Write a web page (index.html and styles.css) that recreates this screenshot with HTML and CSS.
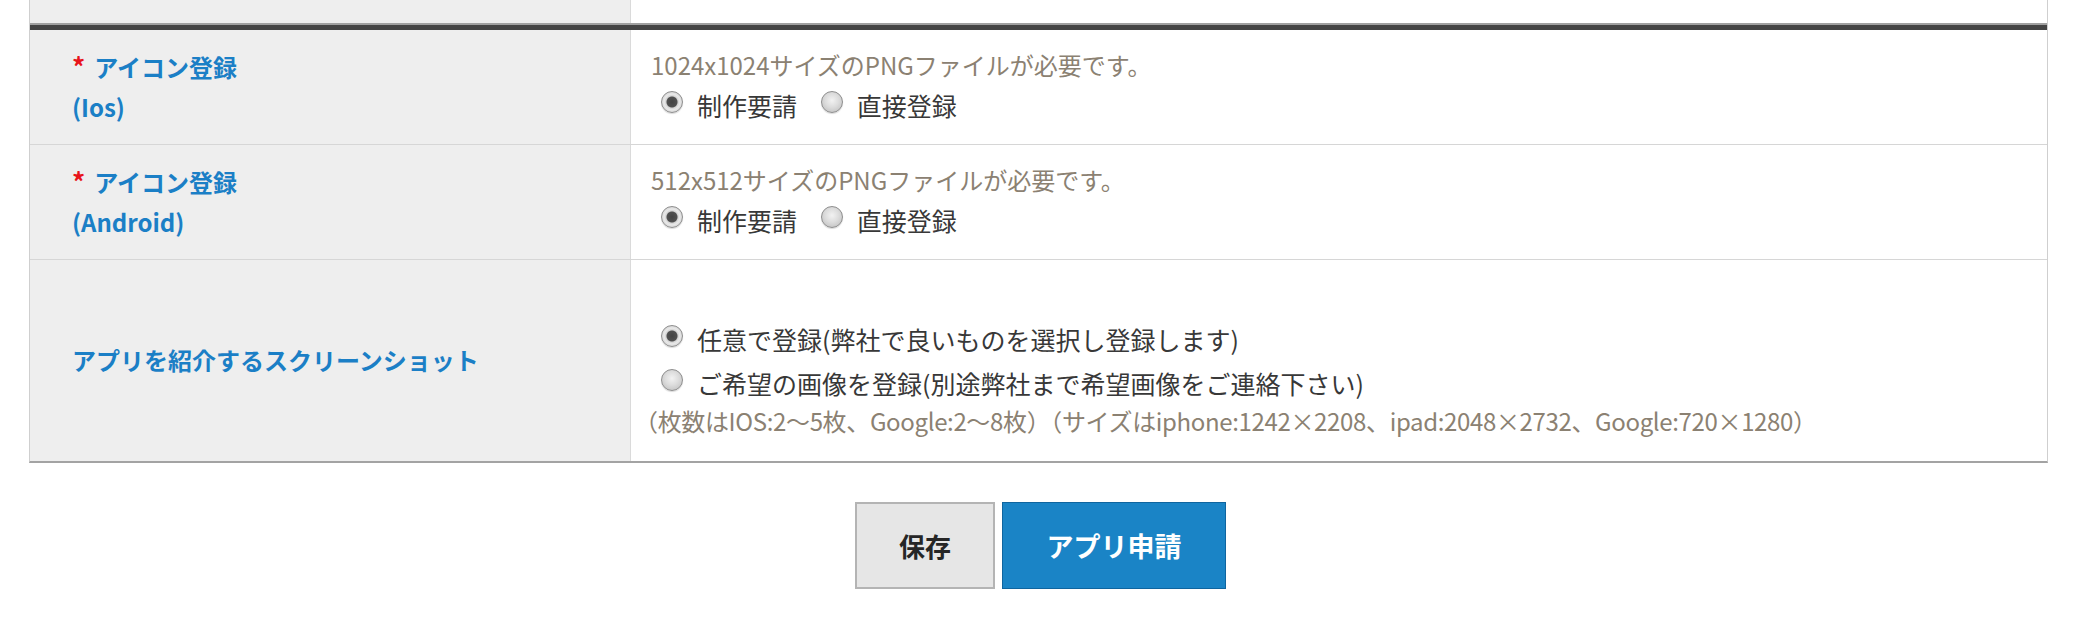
FILE: index.html
```html
<!DOCTYPE html>
<html lang="ja">
<head>
    <meta charset="UTF-8">
    <meta name="viewport" content="width=device-width, initial-scale=1.0">
    <title>アプリ申請</title>
    <link rel="stylesheet" href="styles.css">
</head>
<body>
    <div class="page">
        <div class="form-table">
            <div class="row stub">
                <div class="label"></div>
                <div class="value"></div>
            </div>
            <div class="divider"></div>

            <div class="row">
                <div class="label">
                    <div><span class="req">*</span>アイコン登録</div>
                    <div>(Ios)</div>
                </div>
                <div class="value">
                    <div class="note">1024x1024サイズのPNGファイルが必要です。</div>
                    <div class="opts">
                        <label class="opt"><input type="radio" name="icon_ios" checked>制作要請</label>
                        <label class="opt"><input type="radio" name="icon_ios">直接登録</label>
                    </div>
                </div>
            </div>

            <div class="row">
                <div class="label">
                    <div><span class="req">*</span>アイコン登録</div>
                    <div>(Android)</div>
                </div>
                <div class="value">
                    <div class="note">512x512サイズのPNGファイルが必要です。</div>
                    <div class="opts">
                        <label class="opt"><input type="radio" name="icon_android" checked>制作要請</label>
                        <label class="opt"><input type="radio" name="icon_android">直接登録</label>
                    </div>
                </div>
            </div>

            <div class="row last">
                <div class="label">
                    <div>アプリを紹介するスクリーンショット</div>
                </div>
                <div class="value tall">
                    <div class="blank"></div>
                    <div class="opts">
                        <label class="opt"><input type="radio" name="screenshot" checked>任意で登録(弊社で良いものを選択し登録します)</label>
                    </div>
                    <div class="opts">
                        <label class="opt"><input type="radio" name="screenshot">ご希望の画像を登録(別途弊社まで希望画像をご連絡下さい)</label>
                    </div>
                    <div class="note small">（枚数はIOS:2～5枚、Google:2～8枚）（サイズはiphone:1242×2208、ipad:2048×2732、Google:720×1280）</div>
                </div>
            </div>
        </div>

        <div class="buttons">
            <button type="button" class="btn btn-save">保存</button>
            <button type="button" class="btn btn-apply">アプリ申請</button>
        </div>
    </div>
</body>
</html>
```

FILE: styles.css
```css
/* 全体 */
body {
    margin: 0;
    padding: 0;
    background: #fff;
    font-family: "Noto Sans CJK JP", "Noto Sans", sans-serif;
    color: #3a3a3a;
}

.page {
    padding: 0 31px 0 29px;
}

/* フォームテーブル */
.form-table {
    border-left: 1px solid #cfcfcf;
    border-right: 1px solid #cfcfcf;
    border-bottom: 2px solid #a3a3a3;
}

.row {
    display: grid;
    grid-template-columns: 601px 1fr;
    border-bottom: 1px solid #d6d6d6;
}

.row.last {
    border-bottom: none;
}

.row.stub {
    height: 23px;
    border-bottom: none;
}

.row.stub .label,
.row.stub .value {
    padding: 0;
}

.divider {
    height: 5px;
    background: #444;
    border-top: 2px solid #a0a0a0;
}

.label {
    background: #eeeeee;
    border-right: 1px solid #dadada;
    padding: 16px 20px 17px 42px;
    color: #1b7fc6;
    font-size: 24px;
    font-weight: bold;
    line-height: 40px;
    display: flex;
    flex-direction: column;
    justify-content: center;
}

.req {
    color: #e8141a;
    font-size: 26px;
    margin-right: 9px;
}

.value {
    padding: 17px 20px 17px 20px;
}

.value.tall {
    padding: 19px 20px 19px 20px;
}

.note {
    color: #8b8172;
    font-size: 24px;
    line-height: 36px;
}

.note.small {
    margin-left: -17px;
    letter-spacing: -0.35px;
    line-height: 32px;
    margin-bottom: 5px;
}

.blank {
    height: 38px;
}

/* ラジオボタン */
.opts {
    font-size: 25px;
    line-height: 44px;
    color: #383838;
}

.opt {
    margin-right: 8px;
}

.opt input {
    appearance: none;
    -webkit-appearance: none;
    width: 22px;
    height: 22px;
    margin: 0 14px 0 10px;
    border: 1px solid #8e8e8e;
    border-radius: 50%;
    background: radial-gradient(circle at 50% 42%, #f2f2f2 0, #dcdcdc 45%, #b9b9b9 100%);
    box-shadow: 0 1px 1px rgba(0, 0, 0, 0.15);
    vertical-align: 3px;
    box-sizing: border-box;
}

.opt input:checked {
    background: radial-gradient(circle, #444 0, #505050 5px, #d2d2d2 6px, #e9e9e9 55%, #b9b9b9 100%);
}

/* ボタン */
.buttons {
    display: flex;
    justify-content: center;
    gap: 7px;
    margin-top: 39px;
    padding-left: 4px;
}

.btn {
    height: 87px;
    font-family: "Noto Sans CJK JP", sans-serif;
    font-weight: bold;
    cursor: pointer;
}

.btn-save {
    width: 140px;
    background: #e6e6e6;
    border: 2px solid #b4b4b4;
    color: #262626;
    font-size: 26px;
}

.btn-apply {
    width: 224px;
    background: #1a84c6;
    border: 1px solid #0f659f;
    color: #fff;
    font-size: 27px;
}
```
